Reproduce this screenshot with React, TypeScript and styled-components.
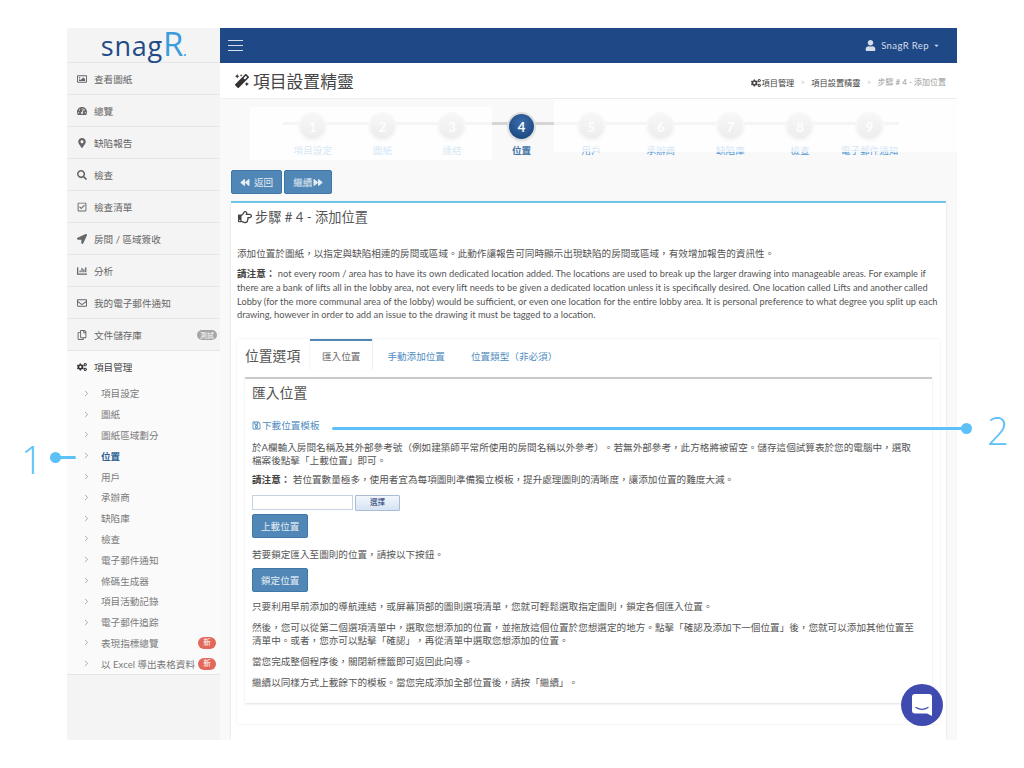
import React from 'react';
import styled, { createGlobalStyle } from 'styled-components';
import { ChevronRight } from 'lucide-react';
import {
  FaBackward,
  FaCaretDown,
  FaChartBar,
  FaCogs,
  FaForward,
  FaLocationArrow,
  FaMagic,
  FaMapMarkerAlt,
  FaRegCheckSquare,
  FaRegCopy,
  FaRegEnvelope,
  FaRegHandPointRight,
  FaRegImage,
  FaRegSave,
  FaSearch,
  FaTachometerAlt,
  FaUser,
} from 'react-icons/fa';

const GlobalStyle = createGlobalStyle`
  html, body {
    margin: 0;
    background: #fff;
    overflow: hidden;
    font-family: Lato, "Noto Sans CJK TC", sans-serif;
    font-size: 9.6px;
    color: #555;
    text-spacing-trim: space-all;
  }
`;

const Page = styled.div`
  position: relative;
  width: 1024px;
  height: 768px;
  padding: 28px 67px;
  box-sizing: border-box;
  overflow: hidden;
`;

const Frame = styled.div`
  display: flex;
  width: 890px;
  height: 712px;
`;

const Sidebar = styled.aside`
  flex: 0 0 153px;
  background: #f4f4f4;
`;

const LogoBox = styled.div`
  height: 34px;
  display: flex;
  align-items: baseline;
  justify-content: center;
  font-family: "Open Sans", sans-serif;
  font-size: 27px;
  line-height: 32px;
  letter-spacing: 0.8px;
  color: #1f4b87;
  span {
    color: #3c9ddc;
    font-size: 33px;
    line-height: 32px;
  }
  i {
    width: 2px;
    height: 2px;
    background: #3c9ddc;
    border-radius: 50%;
    margin: 0 0 8px 0;
  }
`;

const MenuRow = styled.div<{ $strong?: boolean }>`
  height: 31px;
  border-top: 1px solid #e6e6e6;
  display: flex;
  align-items: center;
  padding: 0 10px;
  color: ${(p) => (p.$strong ? '#444' : '#666')};
  background: ${(p) => (p.$strong ? '#fafafa' : 'transparent')};
  svg {
    flex: 0 0 10px;
    width: 10px;
    height: 10px;
    margin-right: 7px;
    color: ${(p) => (p.$strong ? '#333' : '#666')};
  }
`;

const BetaBadge = styled.em`
  margin-left: auto;
  margin-right: -7px;
  font-style: normal;
  font-size: 7px;
  line-height: 10px;
  height: 10px;
  padding: 0 3px;
  border-radius: 5px;
  color: #fff;
  background: #a5a5a5;
`;

const SubMenu = styled.div`
  background: #fafafa;
  padding-top: 1px;
  border-bottom: 1px solid #e6e6e6;
`;

const SubRow = styled.div<{ $active?: boolean }>`
  height: 20.8px;
  display: flex;
  align-items: center;
  padding-left: 15px;
  color: ${(p) => (p.$active ? '#2a5f94' : '#7b7b7b')};
  font-weight: ${(p) => (p.$active ? 700 : 400)};
  white-space: nowrap;
  svg {
    width: 9px;
    height: 9px;
    margin-right: 10px;
    color: #777;
  }
`;

const NewBadge = styled.em`
  margin-left: auto;
  margin-right: 4px;
  font-style: normal;
  font-size: 7.5px;
  line-height: 12px;
  height: 12px;
  width: 18px;
  text-align: center;
  border-radius: 6px;
  color: #fff;
  background: #e2695a;
`;

const Main = styled.main`
  flex: 1;
  min-width: 0;
  position: relative;
  overflow: hidden;
  background: #f9f9f9;
`;

const TopBar = styled.header`
  height: 35px;
  background: #1f4886;
  display: flex;
  align-items: center;
  justify-content: space-between;
  padding: 0 17px 0 8px;
  color: #d5deea;
`;

const Burger = styled.div`
  width: 15px;
  height: 9px;
  border-top: 1px solid #d5deea;
  border-bottom: 1px solid #d5deea;
  position: relative;
  &::after {
    content: '';
    position: absolute;
    left: 0;
    right: 0;
    top: 4px;
    height: 1px;
    background: #d5deea;
  }
`;

const UserMenu = styled.div`
  display: flex;
  align-items: center;
  gap: 4px;
  font-size: 9.6px;
  letter-spacing: 0.35px;
  svg:first-child {
    width: 11px;
    height: 11px;
    margin-right: 1px;
  }
  svg:last-child {
    width: 7px;
    height: 7px;
  }
`;

const TitleBar = styled.div`
  height: 35px;
  background: #fff;
  border-bottom: 1px solid #eee;
  display: flex;
  align-items: center;
  justify-content: space-between;
  padding: 0 11px 0 15px;
`;

const PageTitle = styled.h1`
  margin: 0;
  display: flex;
  align-items: center;
  gap: 4px;
  font-size: 16.8px;
  font-weight: 400;
  color: #444;
  svg {
    width: 14px;
    height: 14px;
    color: #333;
  }
`;

const Crumbs = styled.div`
  display: flex;
  align-items: center;
  gap: 5.5px;
  padding-top: 2px;
  font-size: 8.2px;
  color: #444;
  svg {
    width: 10px;
    height: 10px;
    margin-right: 1px;
    vertical-align: -2px;
  }
`;

const CrumbSep = styled.span`
  color: #bbb;
  font-size: 7px;
  margin: 0 1px;
`;

const CrumbLast = styled.span`
  color: #999;
  font-size: 8px;
`;

const Stepper = styled.div`
  display: grid;
  grid-template-columns: repeat(9, 69.6px);
  height: 71px;
  padding: 8px 0 0 58px;
  box-sizing: border-box;
`;

const Step = styled.div<{ $active?: boolean; $first?: boolean; $last?: boolean }>`
  position: relative;
  display: flex;
  flex-direction: column;
  align-items: center;
  &::before {
    content: '';
    position: absolute;
    top: 15px;
    height: 3px;
    left: ${(p) => (p.$first ? '5px' : '0')};
    right: ${(p) => (p.$last ? '5px' : '0')};
    background: #d5d5d5;
  }
  b {
    position: relative;
    width: 25px;
    height: 25px;
    margin-top: 7px;
    border-radius: 50%;
    display: flex;
    align-items: center;
    justify-content: center;
    font-size: 13px;
    color: ${(p) => (p.$active ? '#fff' : '#f8f8f8')};
    background: ${(p) => (p.$active
    ? 'radial-gradient(circle at 50% 35%, #3a6ca8, #173f78)'
    : 'linear-gradient(#dcdcdc, #b4b4b4)')};
    box-shadow: 0 0 0 2px #e0e0e0, 0 1px 2px 2px rgba(0, 0, 0, 0.05);
  }
  span {
    margin-top: 4px;
    color: ${(p) => (p.$active ? '#3f73a5' : '#4f97d4')};
    font-weight: ${(p) => (p.$active ? 700 : 400)};
    white-space: nowrap;
  }
`;

const Veil = styled.div<{ $left: number; $top: number; $width: number }>`
  position: absolute;
  left: ${(p) => p.$left}px;
  top: ${(p) => p.$top}px;
  width: ${(p) => p.$width}px;
  height: 53px;
  background: rgba(255, 255, 255, 0.76);
`;

const Actions = styled.div`
  display: flex;
  gap: 2px;
  padding-left: 11px;
  height: 31px;
`;

const Button = styled.button<{ $tight?: boolean; $top?: number }>`
  height: 24px;
  margin-top: ${(p) => p.$top ?? 0}px;
  padding: 0 8px;
  display: inline-flex;
  align-items: center;
  gap: ${(p) => (p.$tight ? 1 : 4)}px;
  box-sizing: border-box;
  border: 1px solid #3f77a8;
  border-radius: 2px;
  background: #5087b6;
  color: #e6eef5;
  font: inherit;
  font-size: 9.6px;
  svg {
    width: 10px;
    height: 9px;
  }
`;

const Panel = styled.section`
  margin: 0 11px;
  border-top: 2px solid #6fc6e8;
  background: #fff;
  box-shadow: 0 1px 2px rgba(0, 0, 0, 0.12);
  padding: 0 6px 16px 6px;
  height: 560px;
`;

const PanelHeading = styled.h2`
  margin: 0;
  height: 27px;
  display: flex;
  align-items: center;
  gap: 3px;
  padding-left: 1px;
  font-size: 13.2px;
  font-weight: 400;
  color: #555;
  svg {
    width: 14px;
    height: 14px;
    color: #444;
  }
`;

const Text = styled.p<{ $top?: number; $tall?: boolean }>`
  margin: ${(p) => p.$top ?? 0}px 0 0;
  line-height: ${(p) => (p.$tall ? 13.7 : 13.2)}px;
  color: #555;
  white-space: nowrap;
  strong {
    color: #444;
  }
`;

const Latin = styled.span`
  font-size: 9.27px;
`;

const TabCard = styled.div`
  margin-top: 17px;
  box-shadow: 0 0 2px rgba(0, 0, 0, 0.1);
  height: 385px;
  padding: 0 8px;
`;

const TabStrip = styled.div`
  height: 31px;
  display: flex;
  align-items: stretch;
`;

const TabTitle = styled.div`
  width: 65px;
  font-size: 13.8px;
  color: #555;
  display: flex;
  align-items: center;
`;

const Tab = styled.div<{ $active?: boolean }>`
  display: flex;
  align-items: center;
  padding: 0 ${(p) => (p.$active ? 12 : 11)}px;
  margin-left: ${(p) => (p.$active ? 0 : 4)}px;
  color: ${(p) => (p.$active ? '#666' : '#4f8cbf')};
  background: #fff;
  border-top: 2px solid ${(p) => (p.$active ? '#4f86b5' : 'transparent')};
  box-shadow: ${(p) => (p.$active ? '1px 0 1px rgba(0,0,0,.06), -1px 0 1px rgba(0,0,0,.04)' : 'none')};
`;

const InnerBox = styled.div`
  margin-top: 7px;
  height: 324px;
  border-top: 2px solid #c9c9c9;
  box-shadow: 0 1px 2px rgba(0, 0, 0, 0.12);
  padding: 0 7px;
`;

const InnerTitle = styled.h3`
  margin: 0;
  padding-top: 3px;
  height: 36px;
  box-sizing: border-box;
  font-size: 13.8px;
  font-weight: 400;
  color: #555;
`;

const DownloadLink = styled.a`
  display: flex;
  align-items: center;
  gap: 1px;
  margin-top: 3px;
  height: 14px;
  color: #4f8cbf;
  svg {
    width: 9px;
    height: 9px;
  }
`;

const FileRow = styled.div`
  display: flex;
  align-items: center;
  gap: 2px;
  margin-top: 8px;
`;

const FileField = styled.div`
  width: 99px;
  height: 13px;
  border: 1px solid #c5d3e2;
  background: #fff;
`;

const FileButton = styled.div`
  width: 43px;
  height: 14px;
  border: 1px solid #a9bcd3;
  border-radius: 1px;
  background: linear-gradient(#f2f6fb, #d7e3f2);
  color: #1d3d7a;
  font-size: 7.5px;
  line-height: 14px;
  text-align: center;
`;

const Annotation = styled.div<{ $left: number; $top: number; $width: number }>`
  position: absolute;
  left: ${(p) => p.$left}px;
  top: ${(p) => p.$top}px;
  width: ${(p) => p.$width}px;
  height: 3px;
  border-radius: 2px;
  background: #5bc1f7;
`;

const AnnotationDot = styled.div<{ $left: number; $top: number }>`
  position: absolute;
  left: ${(p) => p.$left}px;
  top: ${(p) => p.$top}px;
  width: 11px;
  height: 11px;
  border-radius: 50%;
  background: #5bc1f7;
`;

const AnnotationNumber = styled.div<{ $left: number; $top: number }>`
  position: absolute;
  left: ${(p) => p.$left}px;
  top: ${(p) => p.$top}px;
  font-family: "Open Sans", sans-serif;
  font-weight: 300;
  font-size: 38px;
  line-height: 44px;
  color: #5bc1f7;
`;

const ChatBubble = styled.div`
  position: absolute;
  left: 901px;
  top: 684px;
  width: 42px;
  height: 42px;
  border-radius: 50%;
  background: #404bb0;
  display: flex;
  align-items: center;
  justify-content: center;
  svg {
    width: 20px;
    height: 22px;
  }
`;

const topMenu = [
  { icon: <FaRegImage />, label: '查看圖紙' },
  { icon: <FaTachometerAlt />, label: '總覽' },
  { icon: <FaMapMarkerAlt />, label: '缺陷報告' },
  { icon: <FaSearch />, label: '檢查' },
  { icon: <FaRegCheckSquare />, label: '檢查清單' },
  { icon: <FaLocationArrow />, label: '房間 / 區域簽收' },
  { icon: <FaChartBar />, label: '分析' },
  { icon: <FaRegEnvelope />, label: '我的電子郵件通知' },
];

const subMenu = [
  '項目設定', '圖紙', '圖紙區域劃分', '位置', '用戶', '承辦商', '缺陷庫', '檢查',
  '電子郵件通知', '條碼生成器', '項目活動記錄', '電子郵件追踪', '表現指標總覽', '以 Excel 導出表格資料',
];

const steps = ['項目設定', '圖紙', '連結', '位置', '用戶', '承辦商', '缺陷庫', '檢查', '電子郵件通知'];

export default function App(): JSX.Element {
  return (
    <Page>
      <GlobalStyle />
      <Frame>
        <Sidebar>
          <LogoBox>
            snag
            <span>R</span>
            <i />
          </LogoBox>
          {topMenu.map((item) => (
            <MenuRow key={item.label}>
              {item.icon}
              {item.label}
            </MenuRow>
          ))}
          <MenuRow>
            <FaRegCopy />
            文件儲存庫
            <BetaBadge>測試</BetaBadge>
          </MenuRow>
          <MenuRow $strong>
            <FaCogs />
            項目管理
          </MenuRow>
          <SubMenu>
            {subMenu.map((label, i) => (
              <SubRow key={label} $active={label === '位置'}>
                <ChevronRight strokeWidth={1.6} />
                {label}
                {i >= 12 && <NewBadge>新</NewBadge>}
              </SubRow>
            ))}
          </SubMenu>
        </Sidebar>
        <Main>
          <TopBar>
            <Burger />
            <UserMenu>
              <FaUser />
              SnagR Rep
              <FaCaretDown />
            </UserMenu>
          </TopBar>
          <TitleBar>
            <PageTitle>
              <FaMagic />
              項目設置精靈
            </PageTitle>
            <Crumbs>
              <span>
                <FaCogs />
                項目管理
              </span>
              <CrumbSep>&gt;</CrumbSep>
              <span>項目設置精靈</span>
              <CrumbSep>&gt;</CrumbSep>
              <CrumbLast>步驟 # 4 - 添加位置</CrumbLast>
            </Crumbs>
          </TitleBar>
          <Stepper>
            {steps.map((label, i) => (
              <Step key={label} $active={i === 3} $first={i === 0} $last={i === 8}>
                <b>{i + 1}</b>
                <span>{label}</span>
              </Step>
            ))}
          </Stepper>
          <Veil $left={30} $top={79} $width={242} />
          <Veil $left={334} $top={71} $width={403} />
          <Actions>
            <Button>
              <FaBackward />
              返回
            </Button>
            <Button $tight>
              繼續
              <FaForward />
            </Button>
          </Actions>
          <Panel>
            <PanelHeading>
              <FaRegHandPointRight />
              步驟 # 4 - 添加位置
            </PanelHeading>
            <Text $top={17}>添加位置於圖紙，以指定與缺陷相連的房間或區域。此動作讓報告可同時顯示出現缺陷的房間或區域，有效增加報告的資訊性。</Text>
            <Text $top={7} $tall>
              <strong>請注意：</strong>
              {' '}
              <Latin>
                not every room / area has to have its own dedicated location added. The locations are used to break up the larger drawing into manageable areas. For example if
                <br />
                there are a bank of lifts all in the lobby area, not every lift needs to be given a dedicated location unless it is specifically desired. One location called Lifts and another called
                <br />
                Lobby (for the more communal area of the lobby) would be sufficient, or even one location for the entire lobby area. It is personal preference to what degree you split up each
                <br />
                drawing, however in order to add an issue to the drawing it must be tagged to a location.
              </Latin>
            </Text>
            <TabCard>
              <TabStrip>
                <TabTitle>位置選項</TabTitle>
                <Tab $active>匯入位置</Tab>
                <Tab>手動添加位置</Tab>
                <Tab>位置類型（非必須）</Tab>
              </TabStrip>
              <InnerBox>
                <InnerTitle>匯入位置</InnerTitle>
                <DownloadLink>
                  <FaRegSave />
                  下載位置模板
                </DownloadLink>
                <Text $top={9}>
                  於A欄輸入房間名稱及其外部參考號（例如建築師平常所使用的房間名稱以外參考）。若無外部參考，此方格將被留空。儲存這個試算表於您的電腦中，選取
                  <br />
                  檔案後點擊「上載位置」即可。
                </Text>
                <Text $top={6}>
                  <strong>請注意：</strong>
                  {' '}
                  若位置數量極多，使用者宜為每項圖則準備獨立模板，提升處理圖則的清晰度，讓添加位置的難度大減。
                </Text>
                <FileRow>
                  <FileField />
                  <FileButton>選擇</FileButton>
                </FileRow>
                <Button $top={3}>上載位置</Button>
                <Text $top={10}>若要鎖定匯入至圖則的位置，請按以下按鈕。</Text>
                <Button $top={7}>鎖定位置</Button>
                <Text $top={8}>只要利用早前添加的導航連結，或屏幕頂部的圖則選項清單，您就可輕鬆選取指定圖則，鎖定各個匯入位置。</Text>
                <Text $top={8}>
                  然後，您可以從第二個選項清單中，選取您想添加的位置，並拖放這個位置於您想選定的地方。點擊「確認及添加下一個位置」後，您就可以添加其他位置至
                  <br />
                  清單中。或者，您亦可以點擊「確認」，再從清單中選取您想添加的位置。
                </Text>
                <Text $top={8}>當您完成整個程序後，關閉新標籤即可返回此向導。</Text>
                <Text $top={7}>繼續以同樣方式上載餘下的模板。當您完成添加全部位置後，請按「繼續」。</Text>
              </InnerBox>
            </TabCard>
          </Panel>
        </Main>
      </Frame>

      <AnnotationNumber $left={21} $top={437}>1</AnnotationNumber>
      <AnnotationDot $left={50} $top={452} />
      <Annotation $left={55} $top={456} $width={21} />
      <Annotation $left={332} $top={427} $width={634} />
      <AnnotationDot $left={961} $top={423} />
      <AnnotationNumber $left={987} $top={408}>2</AnnotationNumber>

      <ChatBubble>
        <svg viewBox="0 0 20 22" fill="none">
          <path d="M3 0h14a3 3 0 0 1 3 3v19l-5-2.6H3a3 3 0 0 1-3-3V3a3 3 0 0 1 3-3z" fill="#fff" />
          <path d="M4 13.5c3.5 2.2 8.5 2.2 12 0" stroke="#404bb0" strokeWidth="1.4" strokeLinecap="round" />
        </svg>
      </ChatBubble>
    </Page>
  );
}
